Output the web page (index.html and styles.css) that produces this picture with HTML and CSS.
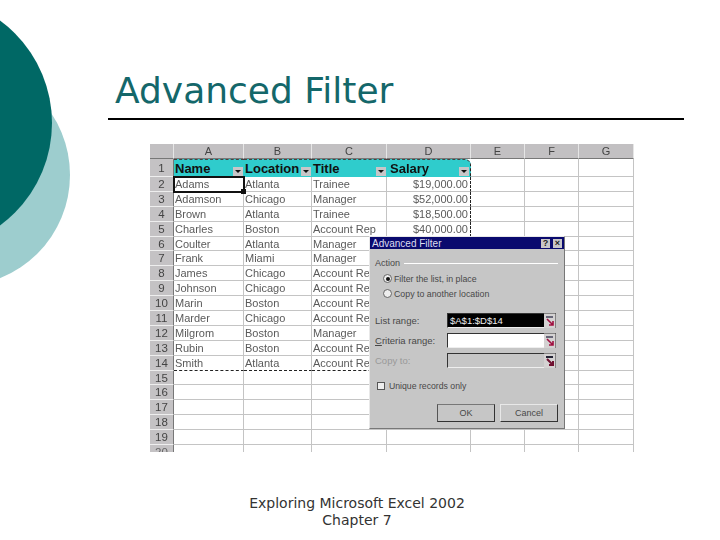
FILE: index.html
```html
<!DOCTYPE html>
<html lang="en">
<head>
<meta charset="utf-8">
<title>Advanced Filter</title>
<link rel="stylesheet" href="styles.css">
</head>
<body>
<div class="slide">
  <div class="circle light"></div>
  <div class="circle dark"></div>
  <header class="head">
    <h1>Advanced Filter</h1>
    <div class="rule"></div>
  </header>
  <main class="sheet-wrap">
    <div class="sheet">
      <div class="corner"></div><div class="ch">A</div><div class="ch">B</div><div class="ch">C</div><div class="ch">D</div><div class="ch">E</div><div class="ch">F</div><div class="ch">G</div>
      <div class="rh r1">1</div><div class="c hd r1">Name<i class="dd"></i></div><div class="c hd r1">Location<i class="dd"></i></div><div class="c hd r1">Title<i class="dd"></i></div><div class="c hd r1 last">Salary<i class="dd"></i></div><div class="c r1"></div><div class="c r1"></div><div class="c r1"></div>
      <div class="rh">2</div><div class="c active">Adams<i class="handle"></i></div><div class="c">Atlanta</div><div class="c">Trainee</div><div class="c num">$19,000.00</div><div class="c"></div><div class="c"></div><div class="c"></div>
      <div class="rh">3</div><div class="c">Adamson</div><div class="c">Chicago</div><div class="c">Manager</div><div class="c num">$52,000.00</div><div class="c"></div><div class="c"></div><div class="c"></div>
      <div class="rh">4</div><div class="c">Brown</div><div class="c">Atlanta</div><div class="c">Trainee</div><div class="c num">$18,500.00</div><div class="c"></div><div class="c"></div><div class="c"></div>
      <div class="rh">5</div><div class="c">Charles</div><div class="c">Boston</div><div class="c over">Account Rep</div><div class="c num">$40,000.00</div><div class="c"></div><div class="c"></div><div class="c"></div>
      <div class="rh">6</div><div class="c">Coulter</div><div class="c">Atlanta</div><div class="c">Manager</div><div class="c num"></div><div class="c"></div><div class="c"></div><div class="c"></div>
      <div class="rh">7</div><div class="c">Frank</div><div class="c">Miami</div><div class="c">Manager</div><div class="c num"></div><div class="c"></div><div class="c"></div><div class="c"></div>
      <div class="rh">8</div><div class="c">James</div><div class="c">Chicago</div><div class="c over">Account Rep</div><div class="c num"></div><div class="c"></div><div class="c"></div><div class="c"></div>
      <div class="rh">9</div><div class="c">Johnson</div><div class="c">Chicago</div><div class="c over">Account Rep</div><div class="c num"></div><div class="c"></div><div class="c"></div><div class="c"></div>
      <div class="rh">10</div><div class="c">Marin</div><div class="c">Boston</div><div class="c over">Account Rep</div><div class="c num"></div><div class="c"></div><div class="c"></div><div class="c"></div>
      <div class="rh">11</div><div class="c">Marder</div><div class="c">Chicago</div><div class="c over">Account Rep</div><div class="c num"></div><div class="c"></div><div class="c"></div><div class="c"></div>
      <div class="rh">12</div><div class="c">Milgrom</div><div class="c">Boston</div><div class="c">Manager</div><div class="c num"></div><div class="c"></div><div class="c"></div><div class="c"></div>
      <div class="rh">13</div><div class="c">Rubin</div><div class="c">Boston</div><div class="c over">Account Rep</div><div class="c num"></div><div class="c"></div><div class="c"></div><div class="c"></div>
      <div class="rh">14</div><div class="c end">Smith</div><div class="c end">Atlanta</div><div class="c over end">Account Rep</div><div class="c num end"></div><div class="c"></div><div class="c"></div><div class="c"></div>
      <div class="rh">15</div><div class="c"></div><div class="c"></div><div class="c"></div><div class="c"></div><div class="c"></div><div class="c"></div><div class="c"></div>
      <div class="rh">16</div><div class="c"></div><div class="c"></div><div class="c"></div><div class="c"></div><div class="c"></div><div class="c"></div><div class="c"></div>
      <div class="rh">17</div><div class="c"></div><div class="c"></div><div class="c"></div><div class="c"></div><div class="c"></div><div class="c"></div><div class="c"></div>
      <div class="rh">18</div><div class="c"></div><div class="c"></div><div class="c"></div><div class="c"></div><div class="c"></div><div class="c"></div><div class="c"></div>
      <div class="rh">19</div><div class="c"></div><div class="c"></div><div class="c"></div><div class="c"></div><div class="c"></div><div class="c"></div><div class="c"></div>
      <div class="rh cut">20</div><div class="c cut"></div><div class="c cut"></div><div class="c cut"></div><div class="c cut"></div><div class="c cut"></div><div class="c cut"></div><div class="c cut"></div>

      <section class="dialog">
        <div class="titlebar"><span>Advanced Filter</span><b class="tb">?</b><b class="tb">×</b></div>
        <div class="dbody">
          <div class="legend"><span>Action</span><i></i></div>
          <div class="radio-row"><i class="radio on"></i><span>Filter the list, in place</span></div>
          <div class="radio-row"><i class="radio"></i><span>Copy to another location</span></div>
          <div class="field f1"><label>List range:</label><div class="input sel"><span>$A$1:$D$14</span></div><svg class="pick" viewBox="0 0 12 15"><rect width="12" height="15" fill="#d4d2d2"/><path d="M0 0h12v15" fill="none" stroke="#333" stroke-width="1"/><path d="M2 3h7v2H2z" fill="#667"/><path d="M3 6l6 6M9 8v4H5" stroke="#a01040" stroke-width="1.6" fill="none"/></svg></div>
          <div class="field"><label><u>C</u>riteria range:</label><div class="input"></div><svg class="pick" viewBox="0 0 12 15"><rect width="12" height="15" fill="#d4d2d2"/><path d="M0 0h12v15" fill="none" stroke="#333" stroke-width="1"/><path d="M2 3h7v2H2z" fill="#667"/><path d="M3 6l6 6M9 8v4H5" stroke="#a01040" stroke-width="1.6" fill="none"/></svg></div>
          <div class="field dis"><label>Copy to:</label><div class="input off"></div><svg class="pick" viewBox="0 0 12 15"><rect width="12" height="15" fill="#d4d2d2"/><path d="M0 0h12v15" fill="none" stroke="#333" stroke-width="1"/><path d="M2 3h7v2H2z" fill="#223"/><path d="M3 6l6 6M9 8v4H5" stroke="#701030" stroke-width="2" fill="none"/></svg></div>
          <div class="check"><i></i><span>Unique records only</span></div>
          <div class="btns"><div class="btn def">OK</div><div class="btn">Cancel</div></div>
        </div>
      </section>
    </div>
  </main>
  <footer class="foot">Exploring Microsoft Excel 2002<br>Chapter 7</footer>
</div>
</body>
</html>
```
FILE: styles.css
```css
* { box-sizing: border-box; }
html, body { margin: 0; padding: 0; }
body { width: 720px; height: 540px; overflow: hidden; background: #fff; }
.slide { position: relative; width: 720px; height: 540px; overflow: hidden; font-family: "DejaVu Sans", sans-serif; padding-top: 70px; }
.circle { position: absolute; border-radius: 50%; }
.dark { left: -202px; top: -4px; width: 254px; height: 254px; background: #006865; }
.light { left: -152px; top: 64px; width: 222px; height: 222px; background: #9dcdce; }
.head { position: relative; margin-left: 108px; width: 576px; }
h1 { margin: 0 0 0 7px; font-weight: 400; font-size: 36px; line-height: 42px; color: #14676a; }
.rule { height: 2px; margin-top: 6px; background: #000; }
.sheet-wrap { margin: 24px 0 0 150px; }
.sheet { position: relative; display: grid; width: 484px; height: 308px; grid-template-columns: 24px 70px 68px 75px 84px 54px 54px 55px; grid-template-rows: 15px 18px repeat(18, 14.9px) 7px; font-family: "Liberation Sans", sans-serif; font-size: 11px; color: #5a5a5a; overflow: hidden; filter: blur(0.35px); }
.corner, .ch { background: #c2c0c2; border-right: 1px solid #e6e6e6; border-bottom: 1px solid #777; }
.ch { text-align: center; line-height: 14px; color: #444; font-size: 11px; }
.rh { background: #c4c2c4; text-align: center; line-height: 15px; border-bottom: 1px solid #eee; border-right: 1px solid #777; color: #444; font-size: 11.5px; }
.rh.r1 { line-height: 18px; }
.c { border-right: 1px solid #c4c4c4; border-bottom: 1px solid #c4c4c4; padding-left: 1px; line-height: 15px; white-space: nowrap; position: relative; }
.over { overflow: visible; }
.num { text-align: right; padding: 0 2px 0 0; border-right: 1px dashed #222; }
.hd { background: #2fcccc; color: #111; font-weight: 700; font-size: 13px; line-height: 17px; border: 0; border-top: 1px dashed #444; }
.hd.last { border-right: 1px dashed #222; border-radius: 0 6px 0 0; padding-left: 3px; }
.dd { position: absolute; right: 1px; bottom: 1px; width: 10px; height: 9px; background: #c8c6c8; }
.dd::after { content: ""; position: absolute; left: 2px; top: 3px; border: 3px solid transparent; border-top: 3px solid #111; border-bottom: 0; }
.active { outline: 2px solid #111; outline-offset: -1px; z-index: 1; overflow: visible; }
.handle { position: absolute; right: -3px; bottom: -3px; width: 5px; height: 5px; background: #111; }
.end { border-bottom: 1px dashed #222; }
.cut { border-bottom: 0; color: #666; }
.dialog { position: absolute; left: 219px; top: 92px; width: 196px; height: 193px; background: #c6c6c6; border-right: 1px solid #777; border-bottom: 1px solid #777; border-left: 1px solid #e8e8e8; border-top: 1px solid #e8e8e8; color: #484848; z-index: 2; }
.titlebar { display: flex; align-items: center; height: 12px; background: #0a0a6e; color: #dde; font-size: 10px; padding: 0 2px; gap: 3px; }
.titlebar span { flex: 1; }
.tb { width: 9px; height: 9px; background: #c8c6c8; color: #222; font-size: 9px; line-height: 9px; text-align: center; }
.dbody { padding: 9px 6px 0 5px; font-size: 9.5px; }
.legend { display: flex; align-items: center; gap: 4px; height: 10px; font-size: 9px; }
.legend i { flex: 1; height: 1px; background: #fff; }
.radio-row { display: flex; align-items: center; gap: 2px; height: 15px; margin-left: 8px; font-size: 8.8px; }
.legend + .radio-row { margin-top: 3px; }
.radio { width: 9px; height: 9px; border-radius: 50%; background: #eee; border: 1px solid #666; position: relative; }
.radio.on::after { content: ""; position: absolute; left: 1.5px; top: 1.5px; width: 4px; height: 4px; border-radius: 50%; background: #111; }
.field { display: flex; align-items: center; height: 15px; margin-top: 5px; }
.field.f1 { margin-top: 12px; }
.field label { width: 72px; }
.field.dis { color: #999; }
.input { width: 97px; height: 15px; background: #fff; border-top: 1px solid #333; border-left: 1px solid #333; border-bottom: 1px solid #eee; }
.input.sel span { display: block; background: #000; color: #eee; height: 100%; padding-left: 2px; line-height: 13px; font-size: 9.5px; }
.input.off { background: #c6c6c6; }
.pick { width: 12px; height: 15px; flex: none; }
.check { display: flex; align-items: center; gap: 4px; margin: 13px 0 0 2px; height: 9px; font-size: 8.7px; }
.check i { width: 8px; height: 8px; background: #eee; border: 1px solid #555; }
.btns { display: flex; justify-content: flex-end; gap: 5px; margin-top: 14px; }
.btn { width: 58px; height: 18px; background: #c6c6c6; border: 1px solid #e8e8e8; border-right-color: #333; border-bottom-color: #333; text-align: center; line-height: 16px; font-size: 9px; }
.btn.def { border-left-color: #555; border-top-color: #777; }
.foot { position: absolute; left: 0; top: 495px; width: 714px; text-align: center; font-size: 14px; line-height: 17px; color: #333; }
```
